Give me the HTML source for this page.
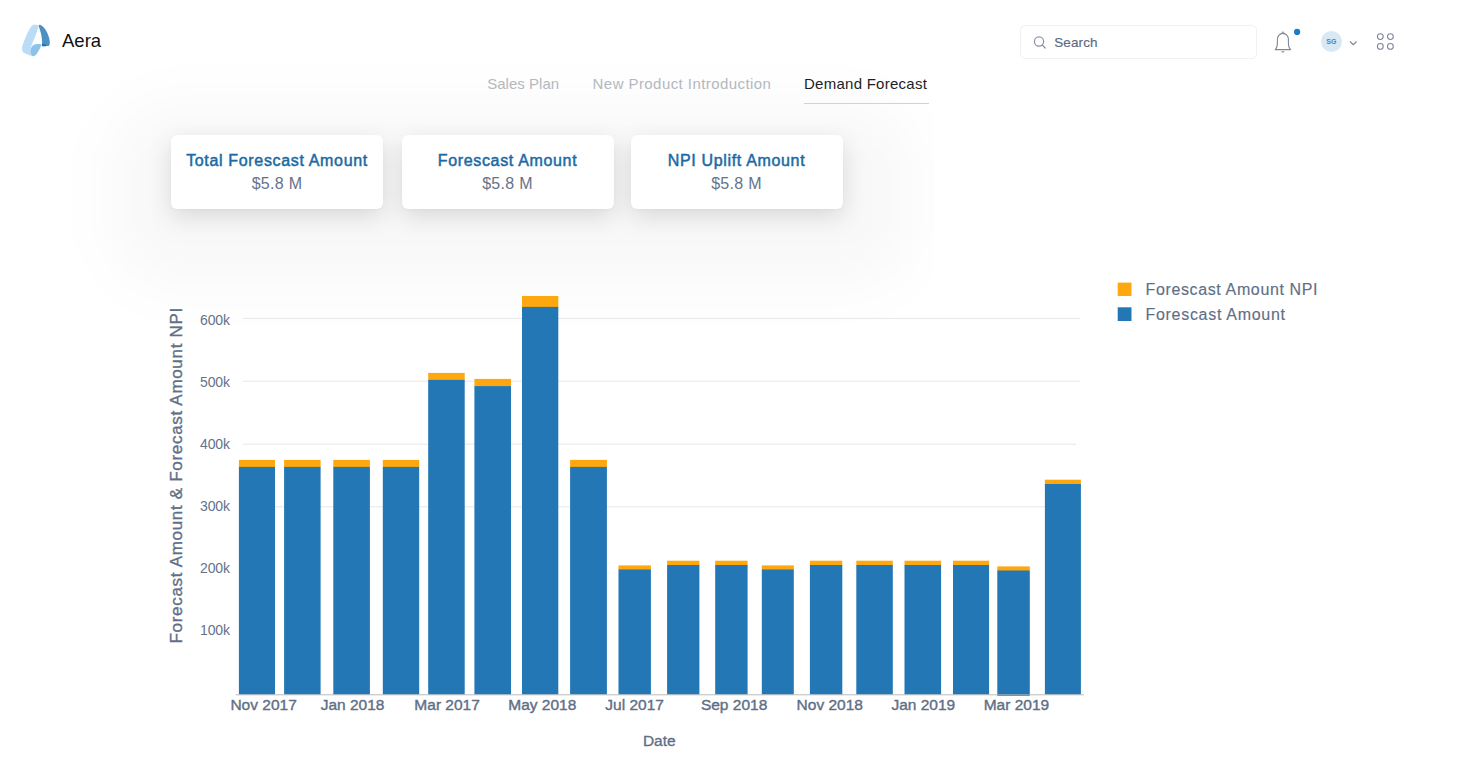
<!DOCTYPE html>
<html lang="en">
<head>
<meta charset="utf-8">
<title>Aera - Demand Forecast</title>
<style>
*{box-sizing:border-box;margin:0;padding:0}
html,body{width:1461px;height:757px;overflow:hidden;background:#fff}
body{position:relative;font-family:"Liberation Sans",Arial,Helvetica,sans-serif;color:#222}
.abs{position:absolute;white-space:nowrap}
.glowclip{position:absolute;left:0;top:40px;width:934px;height:330px;overflow:hidden}
.glow{position:absolute;left:112px;top:64px;width:800px;height:182px;border-radius:60px;background:rgba(0,0,0,0.027);filter:blur(28px)}
  .logo-text{left:62px;top:26.5px;font-size:18.5px;line-height:28px;color:#111;letter-spacing:0}
.search{left:1020px;top:25px;width:236.5px;height:34px;border:1px solid #eff1f3;border-radius:5px;background:#fff}
.search span{position:absolute;left:33.2px;top:8.6px;font-size:13.5px;line-height:16px;color:#5b6a82;letter-spacing:0.12px;-webkit-text-stroke:0.15px #5b6a82}
.tab{font-size:15px;line-height:20px;top:73.7px;color:#b3b8bf}
.tab.active{color:#1b1f24}
.underline{left:804px;top:102.6px;width:125px;height:1.6px;background:#bcd8ee}
.card{position:absolute;top:135px;height:73.5px;width:212px;background:#fff;border-radius:6px;box-shadow:0 8px 24px rgba(0,0,0,0.125), 0 1px 3px rgba(0,0,0,0.03);text-align:center}
.card .t{position:absolute;left:0;right:0;top:15.8px;font-size:16px;line-height:20px;color:#1b6aa5;letter-spacing:0.66px;-webkit-text-stroke:0.5px #1b6aa5;white-space:nowrap}
.card .v{position:absolute;left:0;right:0;top:38.6px;font-size:16px;line-height:20px;color:#657388;letter-spacing:0.3px;white-space:nowrap}
.avatar{left:1321px;top:31px;width:21px;height:21px;border-radius:50%;background:#d9e8f5;color:#4585ba;font-size:7px;font-weight:bold;line-height:21px;text-align:center;letter-spacing:0.2px}
svg{position:absolute;left:0;top:0}
</style>
</head>
<body>
<div class="glowclip"><div class="glow"></div></div>
<div class="abs search"><span>Search</span></div>

<svg width="1461" height="757" viewBox="0 0 1461 757" font-family="Liberation Sans, Arial, sans-serif">
<!-- logo -->
<path d="M38.60,25.40 C38.08,25.30 36.52,24.82 35.50,24.80 C34.48,24.78 33.50,24.55 32.50,25.30 C31.50,26.05 30.57,27.47 29.50,29.30 C28.43,31.13 27.12,34.03 26.10,36.30 C25.08,38.57 24.08,41.00 23.40,42.90 C22.72,44.80 22.15,46.35 22.00,47.70 C21.85,49.05 22.13,50.13 22.50,51.00 C22.87,51.87 22.57,52.03 24.20,52.90 C25.83,53.77 30.95,55.65 32.30,56.20 C32.05,55.73 31.13,54.42 30.80,53.40 C30.47,52.38 30.38,50.65 30.30,50.10 C30.37,49.70 30.33,48.90 30.70,47.70 C31.07,46.50 31.73,44.80 32.50,42.90 C33.27,41.00 34.43,38.57 35.30,36.30 C36.17,34.03 37.15,31.07 37.70,29.30 C38.25,27.53 38.45,26.30 38.60,25.70 Z" fill="#bbdcf6"/>
<path d="M30.30,50.10 C30.52,49.58 30.92,47.92 31.60,47.00 C32.28,46.08 33.33,45.12 34.40,44.60 C35.47,44.08 36.77,43.95 38.00,43.90 C39.23,43.85 41.17,44.23 41.80,44.30 C41.48,45.02 40.70,47.08 39.90,48.60 C39.10,50.12 37.88,52.20 37.00,53.40 C36.12,54.60 35.38,55.33 34.60,55.80 C33.82,56.27 32.68,56.13 32.30,56.20 C32.05,55.73 31.13,54.42 30.80,53.40 C30.47,52.38 30.38,50.65 30.30,50.10 Z" fill="#8cc3eb"/>
<path d="M38.60,25.80 C38.73,25.68 39.07,25.22 39.40,25.10 C39.73,24.98 39.83,24.65 40.60,25.10 C41.37,25.55 42.88,26.50 44.00,27.80 C45.12,29.10 46.43,31.17 47.30,32.90 C48.17,34.63 48.78,36.62 49.20,38.20 C49.62,39.78 49.78,41.22 49.80,42.40 C49.82,43.58 49.52,44.70 49.30,45.30 C49.08,45.90 48.63,45.88 48.50,46.00 C47.47,46.05 43.33,46.25 42.30,46.30 C42.27,45.97 42.18,45.58 42.10,44.30 C42.02,43.02 42.03,40.57 41.80,38.60 C41.57,36.63 41.23,34.60 40.70,32.50 C40.17,30.40 38.95,27.08 38.60,26.00 Z" fill="#4d90c2"/>
<path d="M42.0,44.1 C42.60,44.22 44.85,44.48 45.60,44.80 C46.35,45.12 46.35,45.80 46.50,46.00 L42.3,46.3 Z" fill="#1d6dab"/>
<!-- search icon -->
<circle cx="1039" cy="41.5" r="4.6" fill="none" stroke="#8a93a1" stroke-width="1.2"/>
<line x1="1042.3" y1="45" x2="1045.2" y2="48" stroke="#8a93a1" stroke-width="1.2" stroke-linecap="round"/>
<!-- bell -->
<path d="M1275.2,49.6 L1290.6,49.6 C1288.9,48 1288.4,46 1288.4,42.5 L1288.4,39.3 C1288.4,35.9 1286,33.4 1282.9,33.4 C1279.8,33.4 1277.4,35.9 1277.4,39.3 L1277.4,42.5 C1277.4,46 1276.9,48 1275.2,49.6 Z" fill="none" stroke="#7d8797" stroke-width="1.1" stroke-linejoin="round"/>
<path d="M1282,32.8 a0.9,0.9 0 0 1 1.8,0" fill="none" stroke="#7d8797" stroke-width="1"/>
<path d="M1281.3,51.2 a1.6,1.3 0 0 0 3.2,0 Z" fill="#7d8797"/>
<circle cx="1297.1" cy="31.9" r="3.1" fill="#1c7cc4"/>
<!-- chevron -->
<path d="M1350.3,41.8 L1353.3,44.7 L1356.3,41.8" fill="none" stroke="#7d8797" stroke-width="1.2" stroke-linecap="round" stroke-linejoin="round"/>
<!-- grid icon -->
<g fill="none" stroke="#7d8797" stroke-width="1.1">
<circle cx="1380.3" cy="36.6" r="2.9"/><circle cx="1390.4" cy="36.6" r="2.9"/>
<circle cx="1380.3" cy="46.4" r="2.9"/><circle cx="1390.4" cy="46.4" r="2.9"/>
</g>
<g stroke="#e6e7e9" stroke-width="1">
<line x1="243" x2="1080" y1="318.4" y2="318.4"/>
<line x1="243" x2="1080" y1="381.2" y2="381.2"/>
<line x1="243" x2="1076" y1="444.2" y2="444.2"/>
<line x1="275" x2="1046" y1="506.8" y2="506.8"/>
</g>
<rect x="238.9" y="459.9" width="36.1" height="7.5" fill="#fea70e"/>
<rect x="238.9" y="466.9" width="36.1" height="227.6" fill="#2277b4"/>
<rect x="284.1" y="459.9" width="36.5" height="7.5" fill="#fea70e"/>
<rect x="284.1" y="466.9" width="36.5" height="227.6" fill="#2277b4"/>
<rect x="333.3" y="459.9" width="36.6" height="7.5" fill="#fea70e"/>
<rect x="333.3" y="466.9" width="36.6" height="227.6" fill="#2277b4"/>
<rect x="382.8" y="459.9" width="36.4" height="7.5" fill="#fea70e"/>
<rect x="382.8" y="466.9" width="36.4" height="227.6" fill="#2277b4"/>
<rect x="428.2" y="372.9" width="36.5" height="7.5" fill="#fea70e"/>
<rect x="428.2" y="379.9" width="36.5" height="314.6" fill="#2277b4"/>
<rect x="474.4" y="378.9" width="36.6" height="7.7" fill="#fea70e"/>
<rect x="474.4" y="386.1" width="36.6" height="308.4" fill="#2277b4"/>
<rect x="522.0" y="296.0" width="36.3" height="11.4" fill="#fea70e"/>
<rect x="522.0" y="306.9" width="36.3" height="387.6" fill="#2277b4"/>
<rect x="570.1" y="459.9" width="36.8" height="7.5" fill="#fea70e"/>
<rect x="570.1" y="466.9" width="36.8" height="227.6" fill="#2277b4"/>
<rect x="618.5" y="565.4" width="32.4" height="4.6" fill="#fea70e"/>
<rect x="618.5" y="569.5" width="32.4" height="125.0" fill="#2277b4"/>
<rect x="667.1" y="560.7" width="32.3" height="4.8" fill="#fea70e"/>
<rect x="667.1" y="565.0" width="32.3" height="129.5" fill="#2277b4"/>
<rect x="715.2" y="560.7" width="32.4" height="4.8" fill="#fea70e"/>
<rect x="715.2" y="565.0" width="32.4" height="129.5" fill="#2277b4"/>
<rect x="761.8" y="565.4" width="32.0" height="4.6" fill="#fea70e"/>
<rect x="761.8" y="569.5" width="32.0" height="125.0" fill="#2277b4"/>
<rect x="809.9" y="560.7" width="32.4" height="4.8" fill="#fea70e"/>
<rect x="809.9" y="565.0" width="32.4" height="129.5" fill="#2277b4"/>
<rect x="856.3" y="560.7" width="36.5" height="4.8" fill="#fea70e"/>
<rect x="856.3" y="565.0" width="36.5" height="129.5" fill="#2277b4"/>
<rect x="904.5" y="560.7" width="36.6" height="4.8" fill="#fea70e"/>
<rect x="904.5" y="565.0" width="36.6" height="129.5" fill="#2277b4"/>
<rect x="953.0" y="560.7" width="36.1" height="4.8" fill="#fea70e"/>
<rect x="953.0" y="565.0" width="36.1" height="129.5" fill="#2277b4"/>
<rect x="997.3" y="566.4" width="32.5" height="4.6" fill="#fea70e"/>
<rect x="997.3" y="570.5" width="32.5" height="125.3" fill="#2277b4"/>
<rect x="1044.9" y="479.7" width="36.0" height="4.8" fill="#fea70e"/>
<rect x="1044.9" y="484.0" width="36.0" height="210.5" fill="#2277b4"/>
<line x1="235.7" x2="1084" y1="694.8" y2="694.8" stroke="#b4b4b6" stroke-width="0.9"/>
<g font-size="14" fill="#64738a" text-anchor="end" letter-spacing="-0.15">
<text x="229.8" y="324.5">600k</text>
<text x="229.8" y="386.5">500k</text>
<text x="229.8" y="448.8">400k</text>
<text x="229.8" y="510.6">300k</text>
<text x="229.8" y="573.3">200k</text>
<text x="229.8" y="635.1">100k</text>
</g>
<g font-size="15.5" fill="#5f6f87" stroke="#5f6f87" stroke-width="0.4" letter-spacing="0">
<text x="263.6" y="709.6" text-anchor="middle">Nov 2017</text>
<text x="352.6" y="709.6" text-anchor="middle">Jan 2018</text>
<text x="447.1" y="709.6" text-anchor="middle">Mar 2017</text>
<text x="542.3" y="709.6" text-anchor="middle">May 2018</text>
<text x="634.6" y="709.6" text-anchor="middle">Jul 2017</text>
<text x="734.1" y="709.6" text-anchor="middle">Sep 2018</text>
<text x="829.8" y="709.6" text-anchor="middle">Nov 2018</text>
<text x="923.3" y="709.6" text-anchor="middle">Jan 2019</text>
<text x="1016.4" y="709.6" text-anchor="middle">Mar 2019</text>
</g>
<text x="659.3" y="746.4" font-size="15.5" fill="#5f6f87" stroke="#5f6f87" stroke-width="0.35" letter-spacing="0" text-anchor="middle">Date</text>
<text transform="translate(182.1,475.3) rotate(-90)" font-size="17" fill="#5f6f87" stroke="#5f6f87" stroke-width="0.35" letter-spacing="0.69" text-anchor="middle">Forecast Amount &amp; Forecast Amount NPI</text>
<rect x="1117.7" y="282.6" width="13.8" height="13.4" fill="#fea70e"/>
<rect x="1117.7" y="307.3" width="13.8" height="13.7" fill="#2277b4"/>
<g font-size="16" fill="#5f6f87" stroke="#5f6f87" stroke-width="0.15">
<text x="1145.5" y="294.9" letter-spacing="0.63">Forescast Amount NPI</text>
<text x="1145.5" y="319.6" letter-spacing="0.7">Forescast Amount</text>
</g>
</svg>

<div class="abs logo-text">Aera</div>
<div class="abs avatar">SG</div>

<div class="abs tab" style="left:487.2px;letter-spacing:0.03px">Sales Plan</div>
<div class="abs tab" style="left:592.6px;letter-spacing:0.43px">New Product Introduction</div>
<div class="abs tab active" style="left:804px;letter-spacing:0.26px">Demand Forecast</div>
<div class="abs underline"></div>

<div class="card" style="left:171px"><div class="t">Total Forescast Amount</div><div class="v">$5.8 M</div></div>
<div class="card" style="left:401.5px"><div class="t">Forescast Amount</div><div class="v">$5.8 M</div></div>
<div class="card" style="left:630.5px"><div class="t">NPI Uplift Amount</div><div class="v">$5.8 M</div></div>
</body>
</html>
